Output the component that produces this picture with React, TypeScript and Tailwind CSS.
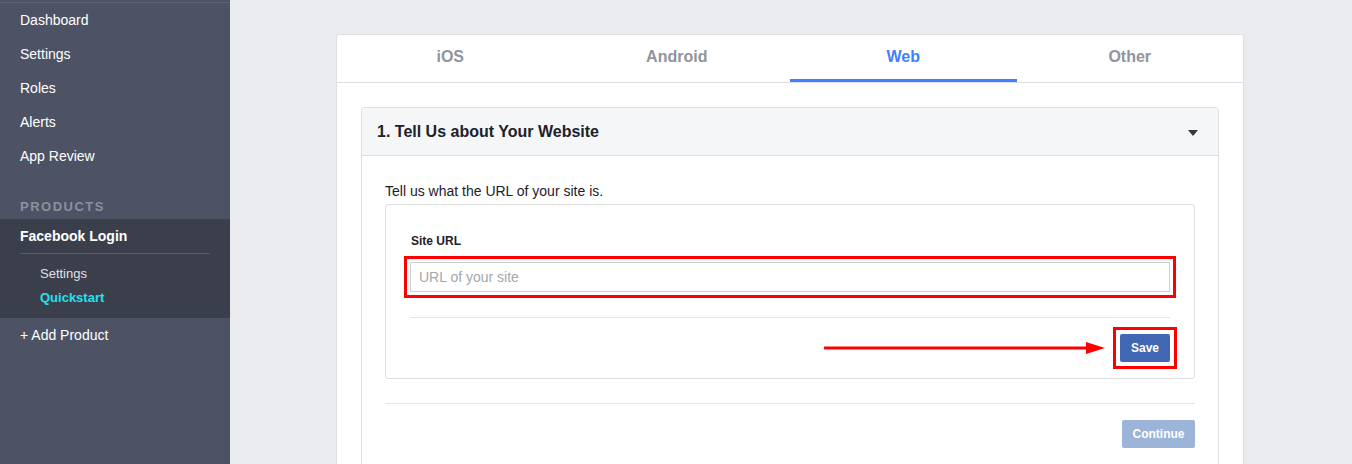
import React from 'react';

const font = "font-['Liberation_Sans',Arial,sans-serif]";

function Sidebar() {
  const top = ['Dashboard', 'Settings', 'Roles', 'Alerts', 'App Review'];
  return (
    <aside className="w-[230px] shrink-0 bg-[#4d5365] text-white">
      <div className="h-[2px]" />
      <div className="h-px bg-[#5d6374]" />
      {top.map((t) => (
        <div key={t} className="h-[34px] flex items-center px-5 text-[14px] leading-4">
          {t}
        </div>
      ))}
      <div className="h-[46px] flex items-end pb-[3px] px-5 text-[13px] font-bold tracking-[1.5px] text-[#8b919e]">
        PRODUCTS
      </div>
      <div className="bg-[#3b3f4c] pb-[8px]">
        <div className="h-[34px] flex items-center px-5 text-[14px] font-bold">Facebook Login</div>
        <div className="mx-5 h-px bg-[#575c69]" />
        <div className="pt-[8px]">
          <div className="h-[24px] flex items-center pl-10 text-[13px] text-[#dfe1e5]">Settings</div>
          <div className="h-[24px] flex items-center pl-10 text-[13px] font-bold text-[#23e2f0]">Quickstart</div>
        </div>
      </div>
      <div className="h-[34px] flex items-center px-5 text-[14px]">+ Add Product</div>
    </aside>
  );
}

function Tabs() {
  const tabs = ['iOS', 'Android', 'Web', 'Other'];
  return (
    <div className="flex border-b border-[#dddfe2]">
      {tabs.map((t) => {
        const active = t === 'Web';
        return (
          <div
            key={t}
            className={`flex-1 h-[47px] flex items-center justify-center text-[16px] font-bold border-b-[3px] pb-[1px] ${
              active ? 'text-[#4080ff] border-[#4080ff]' : 'text-[#90949c] border-transparent'
            }`}
          >
            {t}
          </div>
        );
      })}
    </div>
  );
}

export default function App() {
  return (
    <div className={`flex w-[1352px] h-[464px] overflow-hidden bg-[#e9ebee] ${font}`}>
      <Sidebar />
      <main className="flex-1 pt-[34px]">
        <div className="ml-[106px] w-[908px] bg-white border border-[#dddfe2] rounded-[3px]">
          <Tabs />
          <div className="p-6">
            <div className="border border-[#dddfe2] rounded-[3px]">
              <div className="h-[48px] bg-[#f5f6f7] border-b border-[#dddfe2] flex items-center justify-between pl-[15px] pr-[20px]">
                <span className="text-[16px] font-bold text-[#1d2129]">1. Tell Us about Your Website</span>
                <svg width="10" height="6" viewBox="0 0 10 6" className="mt-[3px]">
                  <path d="M0 0 H10 L5 6 Z" fill="#333840" />
                </svg>
              </div>
              <div className="px-[23px] pt-[27px] pb-6">
                <p className="text-[14px] leading-4 text-[#1d2129]">Tell us what the URL of your site is.</p>
                <div className="mt-[5px] border border-[#dddfe2] rounded-[3px] px-6 pt-[29px] pb-[16px]">
                  <div className="pl-px text-[12px] leading-[14px] font-bold text-[#1d2129]">Site URL</div>
                  <div className="relative mt-[14px]">
                    <input
                      className="w-full h-[30px] border border-[#ccd0d5] px-2 text-[14px] text-[#1d2129] placeholder:text-[#a4a7ac] outline-none"
                      placeholder="URL of your site"
                    />
                    <div className="absolute -inset-[6px] border-[3px] border-[#ff0000] pointer-events-none" />
                  </div>
                  <div className="mt-[25px] h-px bg-[#e5e6e9]" />
                  <div className="relative flex justify-end pt-4">
                    <svg
                      className="absolute left-[414px] top-[23px]"
                      width="282"
                      height="14"
                      viewBox="0 0 282 14"
                    >
                      <line x1="1" y1="7" x2="265" y2="7" stroke="#ff0000" strokeWidth="3" strokeLinecap="round" />
                      <path d="M262 1 L281 7 L262 13 Z" fill="#ff0000" />
                    </svg>
                    <div className="relative">
                      <button className="h-[28px] w-[50px] bg-[#4267b2] rounded-[2px] text-white text-[12px] font-bold">
                        Save
                      </button>
                      <div className="absolute -inset-[7px] border-[3px] border-[#ff0000] pointer-events-none" />
                    </div>
                  </div>
                </div>
                <div className="mt-6 h-px bg-[#e5e6e9]" />
                <div className="flex justify-end pt-4">
                  <button className="h-[28px] w-[73px] bg-[#9cb4d8] rounded-[2px] text-white text-[12px] font-bold">
                    Continue
                  </button>
                </div>
              </div>
            </div>
          </div>
        </div>
      </main>
    </div>
  );
}
